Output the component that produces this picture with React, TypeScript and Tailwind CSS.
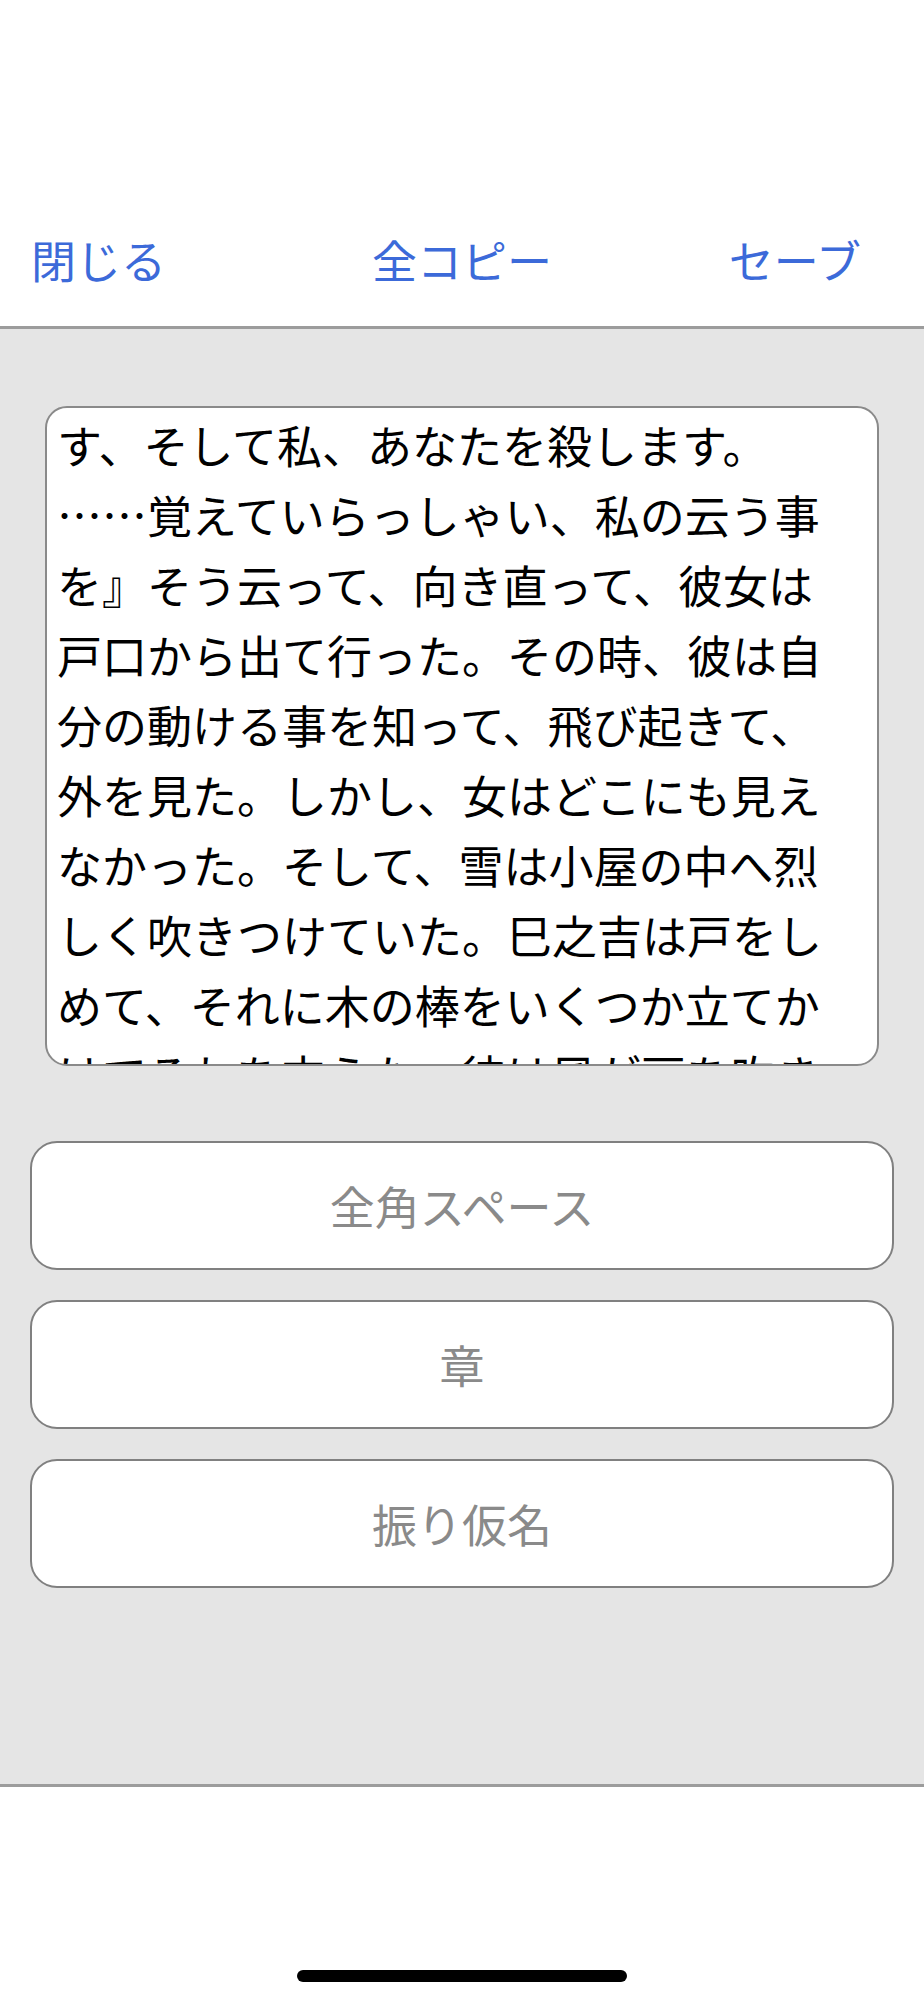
const lines = [
  'す、そして私、あなたを殺します。',
  '……覚えていらっしゃい、私の云う事',
  'を』そう云って、向き直って、彼女は',
  '戸口から出て行った。その時、彼は自',
  '分の動ける事を知って、飛び起きて、',
  '外を見た。しかし、女はどこにも見え',
  'なかった。そして、雪は小屋の中へ烈',
  'しく吹きつけていた。巳之吉は戸をし',
  'めて、それに木の棒をいくつか立てか',
  'けてそれを支えた。彼は風が戸を吹き',
];

const actions = ['全角スペース', '章', '振り仮名'];

export default function App() {
  return (
    <div
      className="w-[924px] min-h-[2000px] bg-white flex flex-col"
      style={{ fontFamily: '"Noto Sans CJK JP", "Noto Sans", sans-serif' }}
    >
      {/* Header */}
      <div className="h-[329px] flex flex-col justify-end border-b-[3px] border-[#9c9c9c] bg-white">
        <div className="grid grid-cols-3 h-[70px] mb-[32px] items-center text-[45px] leading-none text-[#3c6ad9]">
          <button className="text-left pl-[31px]">閉じる</button>
          <button className="text-center">全コピー</button>
          <button className="text-right pr-[63px]">セーブ</button>
        </div>
      </div>

      {/* Editor area */}
      <div className="h-[1458px] bg-[#e5e5e5] border-b-[3px] border-[#9c9c9c] flex flex-col">
        <div className="mt-[77px] mx-[45px] h-[660px] bg-white border-2 border-[#8a8a8a] rounded-[22px] overflow-hidden px-[10px] pt-[2px]">
          {lines.map((line, i) => (
            <div key={i} className="text-[45px] leading-[70px] text-black whitespace-nowrap">
              {line}
            </div>
          ))}
        </div>

        <div className="mt-[75px] mx-[30px] flex flex-col gap-[30px]">
          {actions.map((label) => (
            <button
              key={label}
              className="h-[129px] bg-white border-2 border-[#808080] rounded-[27px] flex items-center justify-center text-[45px] leading-none text-[#8a8a8a]"
            >
              {label}
            </button>
          ))}
        </div>
      </div>

      {/* Home indicator */}
      <div className="flex-1 flex items-end justify-center pb-[18px] bg-white">
        <div className="w-[330px] h-[12px] rounded-full bg-black" />
      </div>
    </div>
  );
}
